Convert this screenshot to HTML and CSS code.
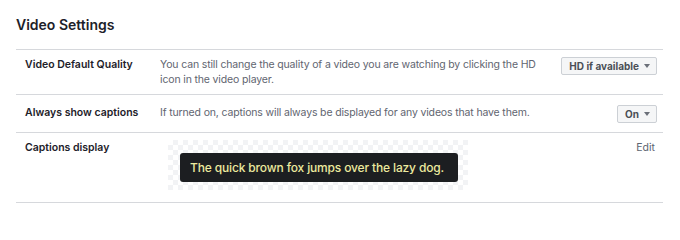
FILE: index.html
```html
<!DOCTYPE html>
<html lang="en">
<head>
<meta charset="utf-8">
<title>Video Settings</title>
<link rel="stylesheet" href="styles.css">
</head>
<body>
<div class="settings">
  <h2 class="title">Video Settings</h2>
  <div class="row row-quality">
    <div class="label">Video Default Quality</div>
    <div class="desc">You can still change the quality of a video you are watching by clicking the HD icon in the video player.</div>
    <div class="control"><span class="btn">HD if available<span class="caret"></span></span></div>
  </div>
  <div class="row row-captions">
    <div class="label">Always show captions</div>
    <div class="desc">If turned on, captions will always be displayed for any videos that have them.</div>
    <div class="control"><span class="btn">On<span class="caret"></span></span></div>
  </div>
  <div class="row row-display">
    <div class="label">Captions display</div>
    <div class="desc">
      <div class="preview"><span class="caption">The quick brown fox jumps over the lazy dog.</span></div>
    </div>
    <div class="control"><span class="edit">Edit</span></div>
  </div>
</div>
</body>
</html>
```
FILE: styles.css
```css
* { box-sizing: border-box; }
html, body { margin: 0; padding: 0; background: #fff; }
body {
  font-family: Inter, "Liberation Sans", Arial, sans-serif;
  color: #1d2129;
}
.settings {
  padding: 15px 17px 0 16px;
}
.title {
  margin: 0 0 14px 0;
  font-size: 14px;
  line-height: 20px;
  font-weight: 600;
  color: #1d2129;
}
.row {
  display: flex;
  align-items: flex-start;
  border-top: 1px solid #d6d8dc;
  padding: 7px 6px 7px 9px;
  font-size: 10.5px;
  line-height: 15px;
}
.row-captions { padding-top: 10px; padding-bottom: 9px; }
.row-display { padding-bottom: 12px; border-bottom: 1px solid #d6d8dc; }
.label {
  flex: none;
  width: 135px;
  font-weight: 600;
  color: #1d2129;
}
.desc {
  flex: 1;
  max-width: 385px;
  color: #5f6570;
  letter-spacing: -0.15px;
}
.row-captions .desc { max-width: 420px; }
.control {
  flex: none;
  margin-left: auto;
  display: flex;
  justify-content: flex-end;
}
.btn {
  display: inline-flex;
  align-items: center;
  height: 18px;
  padding: 0 6px 0 7px;
  border: 1px solid #ccd0d5;
  border-radius: 2px;
  background: #f5f6f7;
  color: #4b4f56;
  font-weight: 700;
  font-size: 10px;
  line-height: 16px;
}
.caret {
  display: inline-block;
  margin-left: 5px;
  width: 0;
  height: 0;
  border-left: 3.5px solid transparent;
  border-right: 3.5px solid transparent;
  border-top: 4px solid #6b7079;
}
.edit {
  margin-right: 2px;
  color: #5d6470;
}
.preview {
  display: inline-block;
  margin-left: 8px;
  width: 300px;
  height: 50px;
  padding: 13px 10px 8px 12px;
  background-color: #fff;
  background-image: conic-gradient(#f2f3f5 25%, #fff 0 50%, #f2f3f5 0 75%, #fff 0);
  background-size: 10px 10px;
}
.caption {
  display: block;
  height: 29px;
  padding: 0 10px;
  background: #1c1e21;
  border-radius: 3px;
  color: #ecea9f;
  font-size: 12px;
  font-weight: 500;
  line-height: 29px;
  white-space: nowrap;
}
```
